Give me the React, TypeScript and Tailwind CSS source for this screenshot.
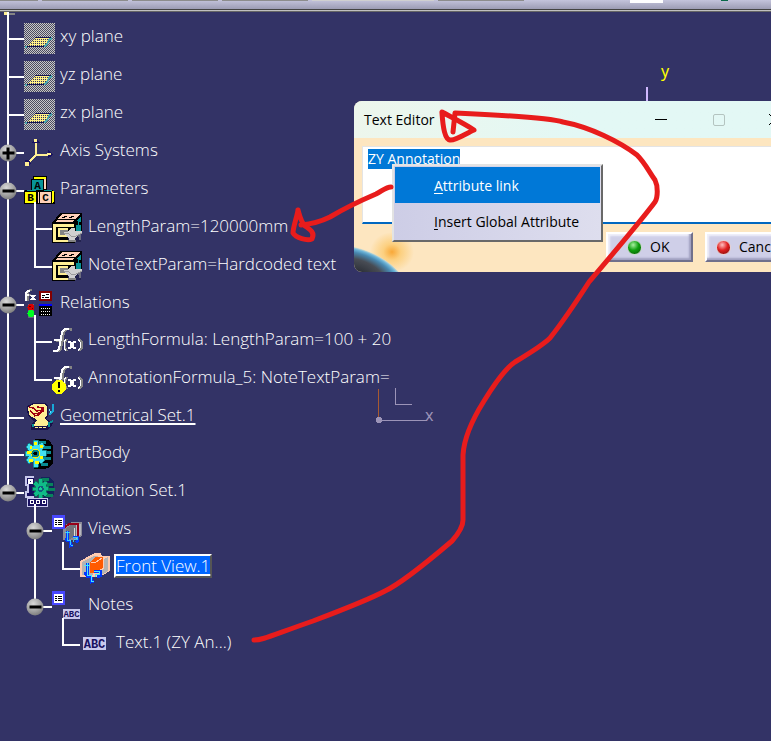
import { useEffect, useRef } from "react";
import type { ReactNode } from "react";

function Icon({ children }: { children: ReactNode }) {
  return (
    <svg
      viewBox="0 0 32 32"
      width="32"
      height="32"
      shapeRendering="crispEdges"
      className="shrink-0 overflow-visible"
      aria-hidden="true"
    >
      {children}
    </svg>
  );
}

function PlaneIcon() {
  return (
    <Icon>
      <defs>
        <pattern id="dither" width="2" height="2" patternUnits="userSpaceOnUse">
          <rect width="2" height="2" fill="#4c4c60" />
          <rect width="1" height="1" fill="#c8c8c8" />
          <rect x="1" y="1" width="1" height="1" fill="#c8c8c8" />
        </pattern>
        <pattern id="ditherYellow" width="2" height="2" patternUnits="userSpaceOnUse">
          <rect width="2" height="2" fill="#ffef84" />
          <rect x="1" width="1" height="1" fill="#30305c" />
        </pattern>
      </defs>
      <rect width="31" height="31" fill="url(#dither)" />
      <path d="M11 15h16l-7 8H3z" fill="url(#ditherYellow)" />
      <path d="M11 14.500h17M3 23.500h17" stroke="#141452" />
      <path d="M1 24h2M28 15l-3 2-2 4-3 3" stroke="#4aa5ad" strokeWidth="2" fill="none" />
    </Icon>
  );
}

function AxisIcon() {
  return (
    <Icon>
      <path d="M12 5v13M12 17.500h14M12 18l-8 8" stroke="#ffef94" strokeWidth="2" fill="none" />
      <path d="M8 6l4-5 4 5zM24 13l5 4.500-5 4zM1 23h4l2 4-4 2z" fill="#181060" />
      <path d="M10 2h3v3h-3zM1 25h4v4H1z" fill="#ffef94" />
      <path d="M23 16h4v2h-4z" fill="#ffef94" />
    </Icon>
  );
}

function BlocksIcon() {
  return (
    <Icon>
      <path d="M9 1h14v14H9z" fill="#000" />
      <path d="M10 2h12v2H10z" fill="#ff0" />
      <path d="M19 4h3v10h-3z" fill="#ffd0b8" />
      <rect x="7" y="4" width="13" height="13" fill="#000" />
      <rect x="8" y="5" width="11" height="11" fill="#089498" />
      <path d="M1 15h27l3 2v12H0V17z" fill="#000" />
      <path d="M3 15h9v1H3zM20 15h8v1h-8z" fill="#089498" />
      <rect x="1" y="17" width="11" height="11" fill="#ff0" />
      <rect x="14" y="17" width="1" height="11" fill="#ffd0b8" />
      <rect x="16" y="17" width="11" height="11" fill="#ffd0b8" />
      <path d="M28 16h2v10l-2 2z" fill="#ff0" />
      <g fontFamily="Liberation Mono" fontWeight="700" fontSize="11" textAnchor="middle">
        <text x="13.500" y="14">A</text>
        <text x="6.500" y="26">B</text>
        <text x="21.500" y="26">C</text>
      </g>
    </Icon>
  );
}

function ParamIcon() {
  return (
    <Icon>
      <path d="M0 10L8 0h22v20l-7 10H0z" fill="#000" />
      <path d="M3 9l2-2h17l-2 2zM6 6l4-5h18l-4 5z" fill="#ffd0b8" />
      <path d="M10 5l5-2M17 5l5-2" stroke="#000" />
      <path d="M24 9l5-6v16l-5 7z" fill="#089498" />
      <path d="M24 8h2v4h-2zM27 9h2v3h-2z" fill="#000" />
      <path d="M1 11h21v3H4v13h14v2H1z" fill="#ffef94" />
      <path d="M6 15h10v9H6z" fill="#ffef94" />
      <path d="M8 17h8v5H8z" fill="#848484" />
      <path d="M16 21h13v8H16z" fill="#23234f" />
      <path d="M26 20h3v7h-2z" fill="#6c6c80" />
      <path d="M12 19h4l3-4h4v3h7v2l-4 2-3 3v2h-6v-2l-5-4z" fill="#d0d0d0" />
      <path d="M12 20h4l3 3h5l6-3" stroke="#9c9c9c" fill="none" />
      <path d="M16 27h8v2h-8z" fill="#848484" />
    </Icon>
  );
}

function RelationsIcon() {
  return (
    <Icon>
      <g fill="none">
        <path d="M8 1H6L4 3v9M2 6h5" stroke="#848484" strokeWidth="2" />
        <path d="M6 2H4L2 4v8M1 6h4M7 6l4 5M11 6l-4 5" stroke="#fff" strokeWidth="2" />
      </g>
      <rect x="15" y="2" width="13" height="10" fill="#840000" />
      <rect x="17" y="4" width="9" height="6" fill="#fff" />
      <path d="M18 6.500h3M22 5.500h3M18 8.500h2M21 8.500h4" stroke="#000" />
      <path d="M4 15h6v14H4z" fill="#848484" opacity=".6" />
      <circle cx="7" cy="18.500" r="3.500" fill="#d80000" />
      <path d="M5 17h2v1H5zM8 19h1v1H8z" fill="#600" />
      <circle cx="7" cy="24.500" r="3.500" fill="#0f2" />
      <rect x="15" y="15" width="13" height="12" fill="#000" />
      <rect x="15" y="15" width="13" height="2" fill="#00f" />
      <path d="M17 19.500h10M17 22.500h10M17 25.500h10" stroke="#fff" strokeDasharray="1 1" />
    </Icon>
  );
}

function FormulaGlyph() {
  return (
    <g fill="none">
      <path d="M19 5V3h-4l-3 3-3 17-2 2H3M4 15h8" stroke="#848484" strokeWidth="2" />
      <path d="M17 3h-4l-3 3-3 17-2 2H1M2 14h8" stroke="#fff" strokeWidth="2" />
      <path d="M15 13l-2 3v6l2 3M27 13l3 3v6l-3 3" stroke="#848484" strokeWidth="2" />
      <path d="M14 13l-2 3v6l2 3M26 13l2 3v6l-2 3" stroke="#fff" strokeWidth="1" />
      <path d="M16 16h2l4 6h2M24 16h-2l-4 6h-2" stroke="#fff" strokeWidth="2" />
    </g>
  );
}

function FormulaIcon() {
  return (
    <Icon>
      <FormulaGlyph />
    </Icon>
  );
}

function FormulaWarningIcon() {
  return (
    <Icon>
      <FormulaGlyph />
      <circle cx="7" cy="23" r="7" fill="#ff0" />
      <path d="M6 18h2v6H6zM6 26h2v2H6z" fill="#000" />
    </Icon>
  );
}

function GeometricalSetIcon() {
  return (
    <Icon>
      <path d="M3 4l6-3h12l3 3v10l-2 3 7 4-2 4-4 3H7v-4l3-5-6-5-1-6z" fill="#181048" />
      <path d="M4 5l6-3h10l3 3v9l-3 2 7 6-5 2H9l4-6-8-5z" fill="#ffef94" />
      <path d="M5 5l4 1 4 3 5-1M6 9l4 3 6-1M10 14l4-1 4-4M13 5l6 1v4" stroke="#a00010" strokeWidth="1.500" fill="none" />
      <path d="M29 2v7l-4 4" stroke="#18a8d8" strokeWidth="2" fill="none" />
      <path d="M25 7l2 4" stroke="#63e0ff" />
      <path d="M29 19l-4 2v4M9 22v3" stroke="#089498" strokeWidth="2" fill="none" />
      <path d="M11 25h12" stroke="#ffef94" strokeDasharray="3 1" />
    </Icon>
  );
}

const gearTeeth = "M9 1h5v5l4-3 3 4-3 4h4v6h-4l3 4-4 4-3-3v6H9v-6l-4 3-3-4 3-4H1v-5h4L2 8l3-4 4 3z";

function PartBodyIcon() {
  return (
    <Icon>
      <path d="M11 0h9l6 2 3 5v17l-4 5-6 1h-9z" fill="#000" />
      <path d="M15 2h7v3h-7zM19 7h8v3h-8zM18 12h9v3h-9zM19 18h8v3h-8zM17 24h7v3h-7z" fill="#088c94" />
      <path d={gearTeeth} fill="#42e0f0" stroke="#087c84" strokeWidth=".8" />
      <path d="M10 3h3v3h-3zM16 6h3v3h-3zM3 12h4v3H3zM5 20h4v3H5zM11 22h4v3h-4zM16 17h3v3h-3zM6 7h2v3H6z" fill="#ff0" />
      <circle cx="11.500" cy="14.500" r="5" fill="#fff200" />
      <circle cx="11.500" cy="14.500" r="4" fill="#087c84" />
      <circle cx="11.500" cy="14.500" r="2" fill="#000" />
    </Icon>
  );
}

function AnnotationSetIcon() {
  return (
    <Icon>
      <path d="M10 0H2v8h2v7H2v5h8" stroke="#c8c8ec" strokeWidth="1.500" fill="#181060" />
      <path d="M4 2h5v5H4z" fill="#fff" />
      <path d="M6 4h1v1H6z" fill="#181060" />
      <path d="M17 0h8l5 4v14l-5 4h-8z" fill="#14245c" />
      <path d="M18 1h7v3h-7zM23 6h6v3h-6zM23 11h8v3h-8zM22 17h7v3h-7z" fill="#08845c" />
      <g transform="translate(8 1) scale(.75)">
        <path d={gearTeeth} fill="#10bc88" stroke="#087454" />
        <circle cx="11.500" cy="14.500" r="4" fill="#145c7c" />
        <circle cx="11.500" cy="14.500" r="2" fill="#18d094" />
      </g>
      <rect x="3.500" y="21.500" width="20" height="8" fill="#181060" stroke="#c8c8ec" />
      <path d="M6.500 23.500h3v3h-3zM12.500 23.500h3v3h-3zM18.500 23.500h3v3h-3z" fill="none" stroke="#fff" />
    </Icon>
  );
}

function ListBadge() {
  return (
    <g>
      <rect width="13" height="14" fill="#4848ff" />
      <rect x="2" y="3" width="9" height="9" fill="#fff" />
      <path d="M3 5.500h2M6 5.500h4M3 7.500h2M6 7.500h4M3 9.500h2M6 9.500h4" stroke="#000" />
    </g>
  );
}

function AxisOverlay() {
  return (
    <g fill="none">
      <path d="M3 1v13h4M3 13l-3-2M7 15v5l3-1M10 9h6v5l-3 1" stroke="#0038ff" strokeWidth="3" />
      <path d="M3 1v12h4v6h3M0 3h6M10 9h5v3h-4v3" stroke="#42e8ff" strokeWidth="1" />
    </g>
  );
}

function ViewsIcon() {
  return (
    <Icon>
      <path d="M11 11l9-4h10v14l-8 4H11z" fill="#8c8c98" />
      <path d="M24 9h5v11l-5 4z" fill="#b8b8c0" />
      <path d="M14 13l7-4h3v12l-6 3h-4z" fill="#74747c" />
      <path d="M13 12l4-3h9v12" stroke="#980018" strokeWidth="2" fill="none" />
      <path d="M22 13v10" stroke="#ddd" />
      <g transform="translate(13 15) scale(.8)">
        <AxisOverlay />
      </g>
      <ListBadge />
    </Icon>
  );
}

function FrontViewIcon() {
  return (
    <Icon>
      <path d="M0 8L11 2l4-2h6l1 3h8v15l-10 6H0z" fill="#ffcbb0" />
      <path d="M2 9l12-6h5l-6 5v14H2zM24 6l4-2v14l-8 5v-5l4-2z" fill="#b4b4b4" />
      <path d="M10 9l6-5h7v11l-9 5h-4z" fill="#ff5a00" />
      <path d="M11 9h5l6-4" stroke="#ffcbb0" fill="none" />
      <g transform="translate(4 9)">
        <AxisOverlay />
      </g>
    </Icon>
  );
}

function NotesIcon() {
  return (
    <Icon>
      <ListBadge />
      <rect x="11" y="18" width="17" height="10" fill="#c8c8ec" />
      <text x="19.500" y="26" textAnchor="middle" fill="#181060" fontFamily="Liberation Mono" fontWeight="700" fontSize="9">ABC</text>
    </Icon>
  );
}

function TextIcon() {
  return (
    <Icon>
      <rect x="3" y="8" width="23" height="13" fill="#c8c8ec" />
      <text x="14.500" y="19" textAnchor="middle" fill="#181060" fontFamily="Liberation Mono" fontWeight="700" fontSize="12">ABC</text>
    </Icon>
  );
}

// One guide column of a tree row: nothing, a passing line, or the branch that ends at the item.
type Guide = "none" | "pass" | "first" | "branch" | "last" | "only";

type Item = {
  label: string;
  icon: () => ReactNode;
  guides: Guide[];
  expander?: "plus" | "minus";
  underline?: boolean;
  selected?: boolean;
  compact?: boolean;
};

const items: Item[] = [
  { label: "xy plane", icon: PlaneIcon, guides: ["first"] },
  { label: "yz plane", icon: PlaneIcon, guides: ["branch"] },
  { label: "zx plane", icon: PlaneIcon, guides: ["branch"] },
  { label: "Axis Systems", icon: AxisIcon, guides: ["branch"], expander: "plus" },
  { label: "Parameters", icon: BlocksIcon, guides: ["branch"], expander: "minus" },
  { label: "LengthParam=120000mm", icon: ParamIcon, guides: ["pass", "first"] },
  { label: "NoteTextParam=Hardcoded text", icon: ParamIcon, guides: ["pass", "last"] },
  { label: "Relations", icon: RelationsIcon, guides: ["branch"], expander: "minus", compact: true },
  { label: "LengthFormula: LengthParam=100 + 20", icon: FormulaIcon, guides: ["pass", "first"] },
  { label: "AnnotationFormula_5: NoteTextParam=", icon: FormulaWarningIcon, guides: ["pass", "last"] },
  { label: "Geometrical Set.1", icon: GeometricalSetIcon, guides: ["branch"], underline: true, compact: true },
  { label: "PartBody", icon: PartBodyIcon, guides: ["branch"] },
  { label: "Annotation Set.1", icon: AnnotationSetIcon, guides: ["last"], expander: "minus" },
  { label: "Views", icon: ViewsIcon, guides: ["none", "first"], expander: "minus" },
  { label: "Front View.1", icon: FrontViewIcon, guides: ["none", "pass", "only"], underline: true, selected: true },
  { label: "Notes", icon: NotesIcon, guides: ["none", "last"], expander: "minus" },
  { label: "Text.1 (ZY An...)", icon: TextIcon, guides: ["none", "none", "only"] },
];

const lineClass: Record<Guide, string> = {
  none: "",
  pass: "bg-white",
  first: "bg-white -mt-2",
  branch: "bg-white",
  last: "bg-white mb-[18px]",
  only: "bg-white -mt-2 mb-[18px]",
};

function Expander({ kind, label }: { kind: "plus" | "minus"; label: string }) {
  return (
    <button
      type="button"
      aria-label={(kind === "plus" ? "Expand " : "Collapse ") + label}
      className="absolute top-1/2 left-1/2 flex size-[17px] -translate-x-1/2 -translate-y-1/2 items-center justify-center rounded-full bg-[radial-gradient(circle_at_40%_30%,#d8d8d8,#a0a0a0_50%,#606060)]"
    >
      <span className="absolute h-[3px] w-[12px] bg-black" />
      {kind === "plus" && <span className="absolute h-[12px] w-[3px] bg-black" />}
    </button>
  );
}

function TreeRow({ item }: { item: Item }) {
  const Glyph = item.icon;
  const own = item.guides.length - 1;
  return (
    <li role="treeitem" aria-level={own + 1} className={item.compact ? "flex h-[37px]" : "flex h-[38px]"}>
      {item.guides.map((guide, i) => (
        <span key={i} className={i === 0 ? "flex w-6 pl-[7px]" : "flex w-7 pl-[10px]"}>
          <span className="relative flex w-[2px]">
            <span className={"w-[2px] " + lineClass[guide]} />
            {i === own && item.expander && <Expander kind={item.expander} label={item.label} />}
          </span>
          {i === own && <span className="h-[2px] flex-1 self-center bg-white" />}
        </span>
      ))}
      <span className="flex items-center gap-1">
        <Glyph />
        <span
          className={
            item.selected
              ? "mb-1.5 -ml-0.5 border-2 border-t-white border-l-white border-r-[#555] border-b-[#555] bg-[#0066ff] leading-5 underline decoration-2 underline-offset-2"
              : item.underline
                ? "mb-1.5 leading-5 underline decoration-2 underline-offset-2"
                : "mb-1.5 leading-5"
          }
        >
          {item.label}
        </span>
      </span>
    </li>
  );
}

function ToolbarEdge() {
  return (
    <header className="flex h-3 flex-col bg-[#333366]">
      <div className="flex h-[9px] items-start bg-linear-to-b from-[#c4c4dc] to-[#9c9cb4]">
        <span className="h-px w-[38px] bg-[#8c8c8c]" />
        <span className="ml-1 h-px w-[86px] bg-[#8c8c8c]" />
        <span className="ml-1 h-px w-[86px] bg-[#8c8c8c]" />
        <span className="ml-1 h-px w-[86px] bg-[#8c8c8c]" />
        <span className="ml-1 h-px w-[122px] bg-[#d0d0d0]" />
        <span className="ml-1 h-px w-[86px] bg-[#8c8c8c]" />
        <span className="ml-[106px] h-[3px] w-[33px] bg-white" />
        <span className="ml-[58px] h-px w-[7px] bg-[#086848]" />
      </div>
      <div className="h-px bg-[#444]" />
      <div className="h-px bg-[#c0c0c0]" />
      <div className="h-px bg-[#666]" />
    </header>
  );
}

function ViewAxes() {
  return (
    <svg className="absolute top-0 left-0" width="771" height="741" shapeRendering="crispEdges" aria-hidden="true">
      <path d="M4 12h3v3H4z" fill="#ffef94" />
      <path d="M9 13h6v2H9z" fill="#848484" />
      <path d="M647 87v16" stroke="#d0b8ff" strokeWidth="2" />
      <path d="M395.500 388v16.500H412M381 420.500h46" stroke="#9c94b8" fill="none" />
      <path d="M378.500 389v29" stroke="#a85a30" />
      <circle cx="379" cy="420" r="3" fill="#9c94b8" />
      <text x="661" y="77" fill="#ff0" fontFamily="Noto Sans" fontSize="16">y</text>
      <text x="425" y="421" fill="#9c94b8" fontFamily="Noto Sans" fontSize="16">x</text>
    </svg>
  );
}

function ContextMenu() {
  return (
    <div
      role="menu"
      className="absolute top-[63px] left-[38px] flex flex-col border-2 border-t-[#e3e3e3] border-l-[#e3e3e3] border-r-[#696969] border-b-[#696969] bg-linear-to-r from-[#cdcde6] to-[#dedeee] p-px whitespace-nowrap"
    >
      <button type="button" role="menuitem" className="h-9 bg-[#0078d7] pt-0.5 pr-[21px] pl-[39px] text-left text-white">
        <u className="underline-offset-2">A</u>ttribute link
      </button>
      <button type="button" role="menuitem" className="h-9 pt-0.5 pr-[21px] pl-[39px] text-left">
        <u className="underline-offset-2">I</u>nsert Global Attribute
      </button>
    </div>
  );
}

function Lamp({ green }: { green?: boolean }) {
  return (
    <span
      className={
        green
          ? "size-[15px] shrink-0 rounded-full border border-[#c8d8c8] bg-[radial-gradient(circle_at_40%_30%,#a8f0a0,#10a010_45%,#045004)]"
          : "size-[15px] shrink-0 rounded-full border border-[#e8d0d0] bg-[radial-gradient(circle_at_40%_30%,#ffc0c0,#e02020_45%,#700808)]"
      }
    />
  );
}

const buttonClass =
  "flex h-[30px] w-[87px] items-center gap-2 border-2 border-t-white border-l-white border-r-[#70708c] border-b-[#70708c] bg-[#cfcfe8] shadow-[inset_-2px_-2px_2px_#a0a0c0,inset_2px_2px_2px_#f0f0fa]";

function TextEditor() {
  const field = useRef<HTMLTextAreaElement>(null);
  useEffect(() => {
    field.current?.focus();
    field.current?.select();
  }, []);

  return (
    <section
      aria-label="Text Editor"
      className="absolute top-[101px] left-[354px] w-[446px] rounded-lg font-['Open_Sans','Noto_Sans',sans-serif] text-sm text-black"
    >
      <div className="overflow-hidden rounded-lg bg-[#fde6c0]">
        <div className="flex h-[37px] items-center bg-linear-to-r from-[#edf6ec] to-[#e3f8f5] to-50% pl-[10px]">
          <h1 className="flex-1">Text Editor</h1>
          <button type="button" aria-label="Minimize" className="flex w-[58px] justify-center">
            <span className="h-px w-3 bg-black" />
          </button>
          <button type="button" aria-label="Maximize" className="flex w-[58px] justify-center">
            <span className="size-3 rounded-[2px] border border-[#b4c4c0]" />
          </button>
          <button type="button" aria-label="Close" className="flex w-[52px] justify-center">
            <svg width="11" height="11" aria-hidden="true">
              <path d="M0 0l11 11M11 0L0 11" stroke="#000" />
            </svg>
          </button>
        </div>
        <div className="px-2 pt-2">
          <textarea
            ref={field}
            aria-label="Text"
            spellCheck={false}
            defaultValue="ZY Annotation"
            className="block h-[78px] w-full resize-none border border-b-2 border-[#e4e4e4] border-b-[#0067c0] bg-white px-[5px] pt-0.5 leading-5 outline-none selection:bg-[#0078d7] selection:text-white"
          />
        </div>
        <div className="flex h-12 items-start pt-2">
          <svg width="60" height="40" className="shrink-0" aria-hidden="true">
            <defs>
              <radialGradient id="glow">
                <stop offset="0" stopColor="#f8a838" />
                <stop offset=".4" stopColor="#fcd080" />
                <stop offset="1" stopColor="#fde6c0" />
              </radialGradient>
              <radialGradient id="globe">
                <stop offset="0" stopColor="#282c34" />
                <stop offset=".55" stopColor="#484c54" />
                <stop offset=".8" stopColor="#4888b0" />
                <stop offset=".92" stopColor="#6cb4d8" />
                <stop offset="1" stopColor="#d0dcd0" />
              </radialGradient>
            </defs>
            <ellipse cx="38" cy="20" rx="22" ry="20" fill="url(#glow)" />
            <ellipse cx="6" cy="42" rx="48" ry="24" transform="rotate(22 6 42)" fill="url(#globe)" />
          </svg>
          <div className="ml-48 flex gap-3">
            <button type="button" className={buttonClass + " pl-[19px]"}>
              <Lamp green />
              OK
            </button>
            <button type="button" className={buttonClass + " pl-[9px]"}>
              <Lamp />
              Cancel
            </button>
          </div>
        </div>
      </div>
      <ContextMenu />
    </section>
  );
}

function PenMarks() {
  return (
    <svg
      className="pointer-events-none absolute top-0 left-0"
      width="771"
      height="741"
      fill="none"
      stroke="#e81c1c"
      strokeWidth="5"
      strokeLinecap="round"
      strokeLinejoin="round"
      aria-hidden="true"
    >
      <path d="M254 640C263 640 270 636 313 621C350 607 372 598 385 591C400 584 425 564 452 541C459 533 463 526 463 520V455C464 438 472 420 484 401C495 383 506 368 515 362C530 353 543 345 550 338C565 319 580 296 589 282C600 269 640 222 655 202C658 197 658 186 655 180C648 170 645 163 637 155C620 142 590 127 563 122C550 118 500 115 455 113L453 132" />
      <path d="M442 113C443 128 445 139 450 140C455 141 467 133 474 130C465 124 453 118 442 112" />
      <path d="M391 187C386 187 382 191 376 194C362 200 345 208 330 217C320 222 311 224 301 225" />
      <path d="M298 210C297 217 293 227 293 233C296 238 307 241 312 239C315 233 311 230 305 226C301 222 300 217 298 210" />
    </svg>
  );
}

export default function App() {
  return (
    <div className="relative min-h-screen overflow-hidden bg-[#333366] font-['Open_Sans','Noto_Sans',sans-serif] text-white">
      <ToolbarEdge />
      <main className="pt-2">
        <ul role="tree" aria-label="Specification tree" className="text-[17px] font-light whitespace-nowrap">
          {items.map((item) => (
            <TreeRow key={item.label} item={item} />
          ))}
        </ul>
        <ViewAxes />
        <TextEditor />
        <PenMarks />
      </main>
    </div>
  );
}
